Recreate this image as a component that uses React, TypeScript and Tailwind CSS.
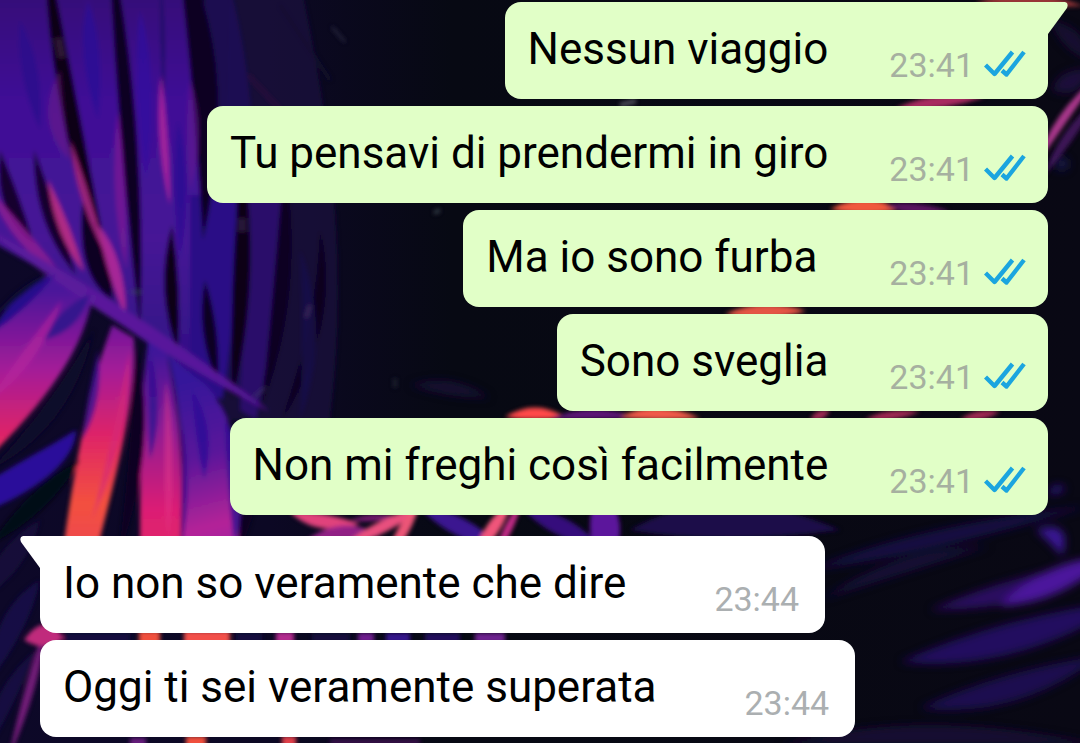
import React from "react";

type Message = { text: string; time: string; mine: boolean; tail?: boolean };

const messages: Message[] = [
  { text: "Nessun viaggio", time: "23:41", mine: true, tail: true },
  { text: "Tu pensavi di prendermi in giro", time: "23:41", mine: true },
  { text: "Ma io sono furba ", time: "23:41", mine: true },
  { text: "Sono sveglia", time: "23:41", mine: true },
  { text: "Non mi freghi così facilmente", time: "23:41", mine: true },
  { text: "Io non so veramente che dire", time: "23:44", mine: false, tail: true },
  { text: "Oggi ti sei veramente superata", time: "23:44", mine: false },
];

type Shape = { d: string; fill: string; o?: number };
type Streak = { d: string; stroke: string; w: number; o?: number };
/** Start, bend and end points, widest width, colour, opacity. */
type Blade = [number, number, number, number, number, number, number, string, number];

function bladePath([x0, y0, cx, cy, x1, y1, w]: Blade) {
  const len = Math.hypot(x1 - x0, y1 - y0) || 1;
  const nx = (-(y1 - y0) / len) * w;
  const ny = ((x1 - x0) / len) * w;
  return `M${x0} ${y0}Q${cx + nx} ${cy + ny} ${x1} ${y1}Q${cx - nx} ${cy - ny} ${x0} ${y0}Z`;
}

const leaves: Shape[] = [
  { d: "M230 -20H300C330 120 350 260 330 420H220Z", fill: "#170a3c", o: 0.75 },
  { d: "M-20 -20H180C202 60 206 140 206 220L218 400L150 345L60 280L-20 235Z", fill: "url(#upper)" },
  { d: "M204 -20H228C256 80 262 200 250 400L206 380Z", fill: "#200a58", o: 0.85 },
  { d: "M190 195H236C238 280 232 340 222 400L190 380Z", fill: "#2a0f86" },
  { d: "M248 195H282C282 280 272 340 256 420L240 410Z", fill: "#2b0d6a" },
  { d: "M50 272L92 300C84 340 60 390 -20 466V345Z", fill: "url(#lower)" },
  { d: "M112 325L134 338C136 400 120 460 97 550H63C74 470 88 390 112 325Z", fill: "url(#lower)" },
  { d: "M148 340L166 350C182 420 184 480 180 550H140C140 470 140 400 148 340Z", fill: "url(#lower2)" },
  { d: "M168 356L205 384C240 420 246 490 244 550H182C184 480 184 420 168 356Z", fill: "url(#lower3)" },
  { d: "M-20 486C20 462 50 446 76 430C76 460 40 490 -20 514Z", fill: "#2a109a" },
];

const blades: Blade[] = [
  [45, -60, 60, 100, 116, 305, 17, "#0a0418", 1],
  [108, -70, 132, 120, 140, 330, 16, "#0b0420", 1],
  [176, -60, 218, 60, 203, 240, 26, "#0b0620", 1],
  [160, -30, 164, 40, 163, 110, 4, "#1a0860", 0.9],
  [0, 150, 8, 210, 34, 245, 16, "#12062e", 1],
  [34, 150, 46, 220, 76, 275, 14, "#12062e", 1],
  [84, 190, 90, 270, 112, 300, 18, "#0c0524", 1],
  [172, 225, 168, 290, 178, 352, 14, "#080618", 1],
  [242, 150, 246, 280, 232, 400, 17, "#080618", 1],
  [284, 160, 290, 290, 262, 405, 16, "#0a0520", 1],
  [205, 280, 208, 330, 218, 385, 13, "#0a0520", 1],
  [320, 230, 330, 320, 282, 420, 12, "#080618", 0.8],
  [300, 250, 318, 330, 300, 420, 14, "#180a48", 0.9],
  [161, 75, 162, 140, 170, 205, 8, "#a8279c", 0.9],
  [118, 110, 118, 190, 126, 270, 10, "#7c1c94", 0.75],
  [70, 140, 84, 200, 106, 255, 8, "#b02a88", 0.85],
  [48, 180, 62, 230, 84, 272, 10, "#c23084", 0.85],
  [98, 225, 114, 260, 126, 318, 12, "#b82c98", 0.85],
  [190, 80, 196, 130, 190, 190, 12, "#6a1590", 0.55],
  [60, 70, 48, 120, 70, 160, 16, "#7a1a86", 0.45],
  [20, 20, 30, 70, 40, 130, 16, "#2b0e8c", 0.8],
  [88, 0, 90, 50, 98, 120, 16, "#2c1096", 0.8],
  [140, 10, 146, 80, 146, 180, 14, "#3110a0", 0.7],
  [178, 120, 182, 180, 180, 260, 12, "#2a0e92", 0.8],
  [-10, 190, 20, 240, 66, 280, 12, "#8a1c92", 0.9],
  [-20, 225, 120, 315, 270, 412, 15, "#5c1a9c", 0.95],
  [-10, 335, 20, 300, 56, 274, 12, "#28108c", 1],
  [90, 294, 68, 320, 44, 340, 16, "#30128c", 0.9],
  [-10, 400, 30, 360, 62, 300, 12, "#b8249c", 0.6],
  [98, 350, 96, 400, 82, 440, 9, "#3a128e", 0.8],
  [130, 350, 120, 440, 92, 520, 7, "#d42a78", 0.7],
  [150, 350, 156, 410, 150, 460, 10, "#2f1090", 0.8],
  [166, 380, 170, 450, 168, 540, 8, "#e63a8c", 0.5],
  [192, 390, 206, 430, 204, 480, 12, "#2c1096", 0.8],
  [225, 420, 242, 470, 234, 545, 16, "#2c1090", 0.8],
  [136, 345, 146, 440, 118, 560, 14, "#090620", 1],
  [50, 272, 20, 290, -10, 320, 6, "#0d0830", 1],
  [94, 330, 60, 420, -10, 470, 16, "#0f072a", 1],
  [182, 420, 188, 480, 181, 550, 6, "#3f108c", 0.9],
  [-10, 545, 40, 500, 80, 460, 18, "#060716", 1],
  [252, 416, 260, 470, 236, 560, 16, "#0a0620", 1],
  [-20, 600, 10, 560, 40, 520, 22, "#150b3c", 0.9],
  [-10, 680, 10, 620, 40, 580, 22, "#1a0d48", 0.9],
  [-10, 745, 0, 700, 36, 650, 16, "#180c44", 0.9],
  [290, 512, 318, 524, 360, 524, 14, "#e0427c", 1],
  [305, 541, 345, 526, 380, 536, 14, "#a02690", 0.9],
  [350, 520, 370, 518, 400, 516, 6, "#8a1f80", 0.9],
  [340, 548, 384, 526, 424, 506, 12, "#e8507e", 1],
  [386, 560, 404, 530, 420, 500, 11, "#ec5577", 1],
  [420, 508, 460, 526, 500, 548, 18, "#3a1290", 1],
  [474, 556, 492, 530, 512, 500, 13, "#f0547a", 1],
  [494, 556, 508, 530, 522, 500, 8, "#c22c86", 1],
  [520, 506, 560, 526, 600, 546, 18, "#34107c", 1],
  [600, 490, 608, 526, 604, 570, 30, "#5c179c", 1],
  [630, 530, 720, 512, 840, 530, 34, "#1a0a48", 1],
  [505, 417, 535, 410, 565, 417, 12, "#ff4a4a", 1],
  [550, 419, 590, 410, 640, 418, 9, "#5e1878", 1],
  [620, 417, 655, 410, 700, 418, 12, "#f05a48", 1],
  [810, 419, 820, 415, 830, 411, 8, "#a42c54", 1],
  [865, 419, 890, 415, 920, 412, 8, "#a42c54", 1],
  [960, 419, 980, 415, 1000, 412, 8, "#a42c54", 1],
  [725, 314, 765, 310, 806, 311, 14, "#e45444", 1],
  [830, 209, 866, 204, 900, 209, 14, "#f0583c", 1],
  [885, 205, 912, 209, 950, 211, 10, "#5a1860", 1],
  [895, 109, 935, 101, 985, 97, 12, "#a82a60", 1],
  [975, 3, 1025, -4, 1084, 6, 12, "#a83a3c", 0.9],
  [1100, 74, 1058, 118, 1036, 166, 9, "#b03a90", 0.95],
  [1100, 96, 1066, 136, 1044, 176, 10, "#4a1668", 0.8],
  [46, 625, 34, 680, 8, 760, 9, "#7c1c80", 0.9],
  [24, 640, 46, 632, 64, 638, 22, "#c02a7c", 1],
];

const gapGlow: Streak[] = [
  { d: "M64 638H130", stroke: "#141040", w: 10 },
  { d: "M139 638H160", stroke: "#f0503c", w: 14 },
  { d: "M184 638H230", stroke: "#f2504a", w: 14 },
  { d: "M236 638H262", stroke: "#141040", w: 10 },
  { d: "M276 638H294", stroke: "#b22c8e", w: 12 },
  { d: "M312 638H350", stroke: "#14103c", w: 10 },
  { d: "M358 638H374", stroke: "#701c90", w: 10 },
  { d: "M386 638H410", stroke: "#34148c", w: 10 },
  { d: "M425 638H460", stroke: "#24105c", w: 10 },
  { d: "M475 638H505", stroke: "#6e2090", w: 10 },
  { d: "M130 742H146", stroke: "#6a1c80", w: 8 },
  { d: "M186 742H206", stroke: "#f0503c", w: 12 },
  { d: "M282 742H296", stroke: "#e04048", w: 12 },
  { d: "M330 742H420", stroke: "#4c1460", w: 6, o: 0.7 },
];

const farBlades: Blade[] = [
  [810, 570, 920, 540, 1090, 506, 16, "#1a0c48", 0.9],
  [820, 600, 900, 560, 990, 546, 14, "#150a40", 0.8],
  [930, 610, 1030, 590, 1120, 560, 22, "#2a0c60", 1],
  [1000, 606, 1052, 582, 1110, 556, 24, "#4c189c", 1],
  [900, 662, 1010, 645, 1130, 600, 30, "#24105e", 1],
  [920, 708, 1010, 695, 1100, 656, 26, "#1c0f50", 1],
  [780, 745, 920, 725, 1100, 745, 20, "#160a30", 1],
  [1036, 530, 1062, 530, 1062, 556, 16, "#3a1896", 1],
  [1048, 494, 1056, 488, 1066, 488, 9, "#2a1278", 0.9],
  [1056, 170, 1062, 160, 1068, 160, 16, "#1c1a50", 0.8],
  [410, 385, 450, 385, 490, 398, 14, "#180c38", 0.8],
  [1052, 90, 1070, 84, 1090, 70, 20, "#230c44", 0.8],
  [1050, 20, 1075, 40, 1090, 60, 18, "#170a38", 0.8],
];

const fineLines: Streak[] = [
  { d: "M332 27L345 42", stroke: "#3c3c54", w: 2, o: 0.7 },
  { d: "M620 105L636 101", stroke: "#8b8b98", w: 4, o: 0.6 },
  { d: "M434 213L440 210", stroke: "#45505c", w: 4, o: 0.7 },
  { d: "M248 75L285 115", stroke: "#35103f", w: 5, o: 0.5 },
  { d: "M280 5L330 80", stroke: "#141430", w: 4, o: 0.7 },
  { d: "M310 305L306 318", stroke: "#55406a", w: 4, o: 0.5 },
  { d: "M254 397L266 387", stroke: "#4b4270", w: 3, o: 0.5 },
  { d: "M395 378V388", stroke: "#2b323e", w: 3, o: 0.7 },
  { d: "M130 292H142", stroke: "#405060", w: 5, o: 0.4 },
  { d: "M58 38L62 58", stroke: "#3c2040", w: 8, o: 0.7 },
  { d: "M242 218V232", stroke: "#3c2050", w: 9, o: 0.6 },
];

function Strokes({ items }: { items: Streak[] }) {
  return (
    <>
      {items.map((s) => (
        <path key={s.d} d={s.d} fill="none" stroke={s.stroke} strokeWidth={s.w} opacity={s.o ?? 1} />
      ))}
    </>
  );
}

function Blades({ items }: { items: Blade[] }) {
  return (
    <>
      {items.map((b, i) => (
        <path key={i} d={bladePath(b)} fill={b[7]} opacity={b[8]} />
      ))}
    </>
  );
}

function Wallpaper() {
  return (
    <svg
      className="absolute inset-0 h-full w-full"
      viewBox="0 0 1080 743"
      preserveAspectRatio="xMidYMid slice"
      aria-hidden="true"
    >
      <defs>
        <linearGradient id="upper" x1="0" y1="0" x2="0" y2="400" gradientUnits="userSpaceOnUse">
          <stop offset="0" stopColor="#36107a" />
          <stop offset="0.25" stopColor="#3f1096" />
          <stop offset="0.6" stopColor="#461496" />
          <stop offset="1" stopColor="#2c1080" />
        </linearGradient>
        <linearGradient id="lower" x1="0" y1="290" x2="0" y2="540" gradientUnits="userSpaceOnUse">
          <stop offset="0" stopColor="#4a149a" />
          <stop offset="0.32" stopColor="#a41c98" />
          <stop offset="0.58" stopColor="#de2468" />
          <stop offset="0.85" stopColor="#f3503f" />
          <stop offset="1" stopColor="#ef4a4c" />
        </linearGradient>
        <linearGradient id="lower2" x1="0" y1="340" x2="0" y2="540" gradientUnits="userSpaceOnUse">
          <stop offset="0" stopColor="#33129a" />
          <stop offset="0.45" stopColor="#8e1c94" />
          <stop offset="0.85" stopColor="#dc1e74" />
          <stop offset="1" stopColor="#e0246c" />
        </linearGradient>
        <linearGradient id="lower3" x1="180" y1="380" x2="225" y2="550" gradientUnits="userSpaceOnUse">
          <stop offset="0" stopColor="#34129a" />
          <stop offset="0.45" stopColor="#5a169a" />
          <stop offset="0.85" stopColor="#b42498" />
          <stop offset="1" stopColor="#a022a0" />
        </linearGradient>
        <linearGradient id="night" x1="0" y1="0" x2="1080" y2="0" gradientUnits="userSpaceOnUse">
          <stop offset="0" stopColor="#0d0828" />
          <stop offset="0.25" stopColor="#0c0824" />
          <stop offset="0.42" stopColor="#070913" />
          <stop offset="1" stopColor="#090814" />
        </linearGradient>
        <filter id="soft" x="-5%" y="-5%" width="110%" height="110%">
          <feGaussianBlur stdDeviation="2" />
        </filter>
        <filter id="haze" x="-10%" y="-10%" width="120%" height="120%">
          <feGaussianBlur stdDeviation="4" />
        </filter>
      </defs>
      <rect width="1080" height="743" fill="url(#night)" />
      <g filter="url(#haze)">
        <Blades items={farBlades} />
      </g>
      <g filter="url(#soft)">
        {leaves.map((s) => (
          <path key={s.d} d={s.d} fill={s.fill} opacity={s.o ?? 1} />
        ))}
        <Blades items={blades} />
        <Strokes items={gapGlow} />
        <Strokes items={fineLines} />
      </g>
    </svg>
  );
}

function ReadTicks() {
  return (
    <svg className="mb-[5px] h-7 w-[42px] shrink-0" viewBox="0 0 42 28" role="img" aria-label="Letto">
      <g fill="none" stroke="#1ba5df" strokeWidth="4.4" strokeLinejoin="round">
        <path d="M1.500 15L10.500 24L28.500 2" />
        <path d="M18 20.500L22.500 24.500L40 2" />
      </g>
    </svg>
  );
}

function Tail({ mine }: { mine: boolean }) {
  return mine ? (
    <svg className="absolute top-0 left-full h-8 w-5" viewBox="0 0 20 32" aria-hidden="true">
      <path d="M-1 0H17Q21 1 19 6L0 32H-1Z" fill="#e1ffc7" />
    </svg>
  ) : (
    <svg className="absolute top-0 right-full h-8 w-5" viewBox="0 0 20 32" aria-hidden="true">
      <path d="M21 0H3Q-1 1 1 6L20 32H21Z" fill="#ffffff" />
    </svg>
  );
}

function Bubble({ text, time, mine, tail }: Message) {
  const side = mine ? "self-end bg-[#e1ffc7] pr-[22px] gap-[61px]" : "self-start bg-white pr-[26px] gap-[88px]";
  const corner = !tail ? "" : mine ? "rounded-tr-none" : "rounded-tl-none mt-[14px]";
  return (
    <li className={`relative flex h-[97px] items-end rounded-2xl pb-4 pl-[23px] ${side} ${corner}`}>
      {tail && <Tail mine={mine} />}
      <p className="mb-2 whitespace-pre text-[44px] leading-[52px] text-black">{text}</p>
      <div className="flex items-end gap-2.5">
        <time className={`text-[34px] leading-9 ${mine ? "text-[#a6b0a0]" : "text-[#abafb1]"}`}>{time}</time>
        {mine && <ReadTicks />}
      </div>
    </li>
  );
}

export default function App() {
  return (
    <main className="relative min-h-screen overflow-hidden bg-[#090814] font-['Roboto',sans-serif]">
      <Wallpaper />
      <ul className="relative flex flex-col gap-[7px] pt-0.5 pr-8 pb-1 pl-10">
        {messages.map((m) => (
          <Bubble key={m.text} {...m} />
        ))}
      </ul>
    </main>
  );
}
